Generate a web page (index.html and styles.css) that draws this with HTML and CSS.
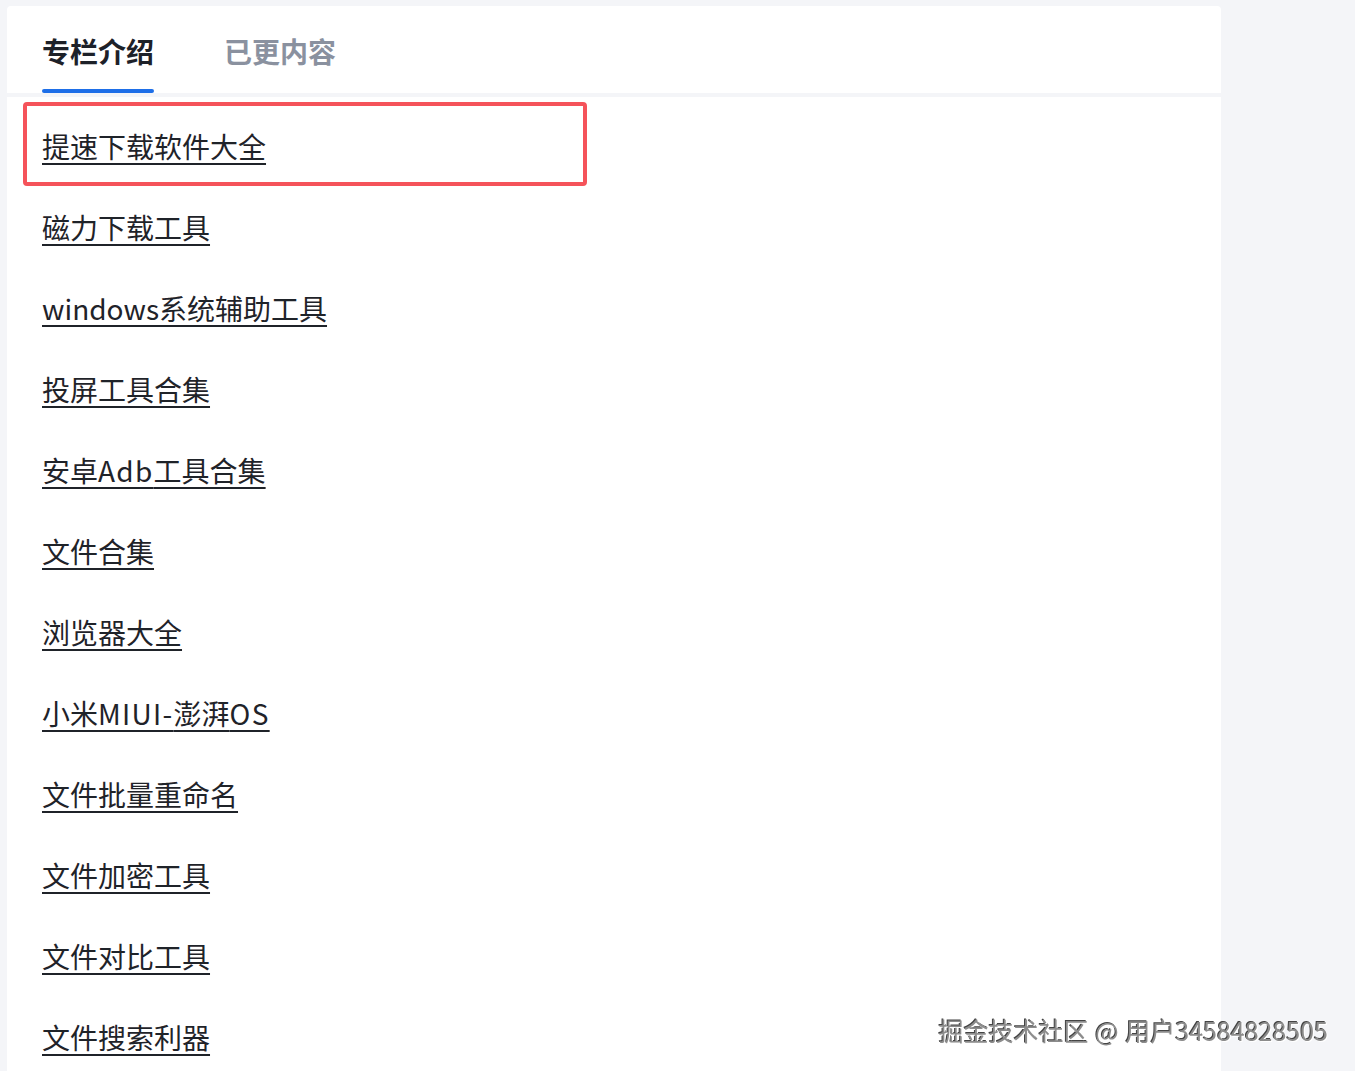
FILE: index.html
```html
<!DOCTYPE html>
<html lang="zh">
<head>
<meta charset="utf-8">
<title>专栏介绍</title>
<link rel="stylesheet" href="styles.css">
</head>
<body>
<div class="page">
  <div class="tabs-card">
    <div class="tab active">专栏介绍</div>
    <div class="tab">已更内容</div>
  </div>
  <div class="list-card">
    <div class="highlight"></div>
    <ul class="list">
      <li><a href="#">提速下载软件大全</a></li>
      <li><a href="#">磁力下载工具</a></li>
      <li><a href="#">windows系统辅助工具</a></li>
      <li><a href="#">投屏工具合集</a></li>
      <li><a href="#">安卓<span class="lat">Adb</span>工具合集</a></li>
      <li><a href="#">文件合集</a></li>
      <li><a href="#">浏览器大全</a></li>
      <li><a href="#">小米<span class="lat">MIUI-</span>澎湃<span class="lat">OS</span></a></li>
      <li><a href="#">文件批量重命名</a></li>
      <li><a href="#">文件加密工具</a></li>
      <li><a href="#">文件对比工具</a></li>
      <li><a href="#">文件搜索利器</a></li>
    </ul>
  </div>
</div>
<div class="watermark">掘金技术社区 @ 用户34584828505</div>
</body>
</html>
```
FILE: styles.css
```css
html, body {
  margin: 0;
  padding: 0;
  height: 100%;
  overflow: hidden;
}
body {
  background: #f4f5f8;
  font-family: "Noto Sans CJK SC", "Noto Sans", sans-serif;
  color: #1f2329;
}
.page {
  width: 1214px;
  padding: 6px 0 0 7px;
}
.tabs-card {
  background: #fff;
  border-radius: 4px 4px 0 0;
  height: 87px;
  box-sizing: border-box;
  padding: 25px 0 0 35px;
  display: flex;
  gap: 70px;
}
.tab {
  font-size: 28px;
  line-height: 40px;
  font-weight: 700;
  color: #8a919f;
  position: relative;
  height: 62px;
}
.tab.active {
  color: #1d2129;
}
.tab.active::after {
  content: "";
  position: absolute;
  left: 0;
  right: 0;
  bottom: 0;
  height: 4px;
  border-radius: 2px;
  background: #1e6fe8;
}
.list-card {
  margin-top: 4px;
  background: #fff;
  position: relative;
  min-height: 1000px;
  padding-top: 9px;
}
.highlight {
  position: absolute;
  left: 16px;
  top: 5px;
  width: 556px;
  height: 76px;
  border: 4px solid #f5535a;
  border-radius: 4px;
}
.list {
  list-style: none;
  margin: 0;
  padding: 0 0 0 35px;
}
.list li {
  height: 81px;
  line-height: 81px;
  font-size: 28px;
}
.list a {
  color: #1f2329;
  text-decoration: underline;
  text-decoration-thickness: 2px;
  text-underline-offset: 5px;
}
.list .lat {
  letter-spacing: 1.3px;
}
.watermark {
  position: fixed;
  right: 27px;
  top: 1013px;
  font-size: 25px;
  line-height: 34px;
  color: #8c8c8c;
  text-shadow: 1px 1px 0 #fff, -1px -1px 0 #444;
  word-spacing: 1px;
}
```
